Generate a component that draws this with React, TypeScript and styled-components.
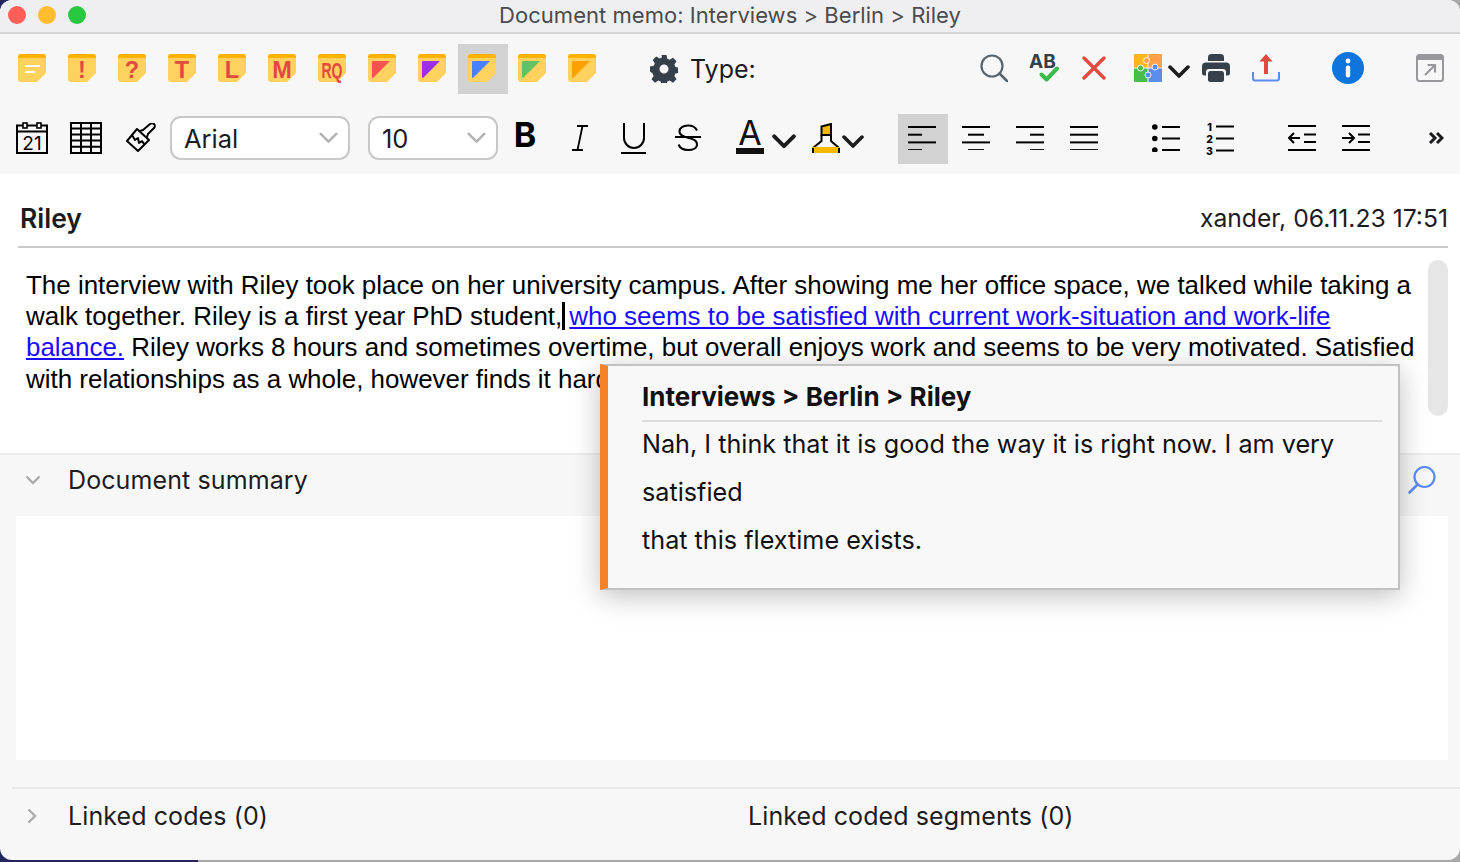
import React from 'react'
import styled, { createGlobalStyle } from 'styled-components'

const memoColors = ['#f5534f', '#9b30e8', '#4a80ff', '#62c264', '#ff9f00']

function MemoIcon({ label, tri }: { label?: string; tri?: string }) {
  return (
    <svg width="28" height="28" viewBox="0 0 28 28" overflow="visible">
      <path d="M3 0H25a3 3 0 0 1 3 3V19l-9 9H3a3 3 0 0 1-3-3V3a3 3 0 0 1 3-3z" fill="#ffd25f" />
      <path d="M3 0H25a3 3 0 0 1 3 3V4H0V3a3 3 0 0 1 3-3z" fill="#ffb300" />
      {tri && <path d="M5 7H22L5 24a1 1 0 0 1-1-1V8a1 1 0 0 1 1-1z" fill={tri} />}
      {label === undefined && !tri && (
        <g stroke="#fff" strokeWidth="2.2">
          <path d="M7 12H22M7 18H17" />
        </g>
      )}
      {label && (
        <text
          x="14"
          y="24"
          textAnchor="middle"
          fill="#e2493f"
          fontFamily="'Liberation Sans', Arial, sans-serif"
          fontWeight="700"
          fontSize={label === 'RQ' ? 22 : 23.5}
          textLength={label === 'RQ' ? 21 : undefined}
          lengthAdjust="spacingAndGlyphs"
        >
          {label}
        </text>
      )}
    </svg>
  )
}

function Chevron({ size = 22, color = '#1c1c1e', width = 3.6 }: { size?: number; color?: string; width?: number }) {
  return (
    <svg width={size} height={size * 0.6} viewBox="0 0 22 13">
      <path d="M2 2l9 9 9-9" fill="none" stroke={color} strokeWidth={width} strokeLinecap="round" strokeLinejoin="round" />
    </svg>
  )
}

function Gear() {
  return (
    <svg width="28" height="28" viewBox="0 0 28 28">
      <path
        fillRule="evenodd"
        fill="#36404a"
        d="M11.5 0h5l.8 3.8 2.4 1 3.3-2.1 3.5 3.5-2.1 3.3 1 2.4 3.8.8v5l-3.8.8-1 2.4 2.1 3.3-3.5 3.5-3.3-2.1-2.4 1-.8 3.8h-5l-.8-3.8-2.4-1-3.3 2.1-3.5-3.5 2.1-3.3-1-2.4L0 16.500v-5l3.8-.8 1-2.400-2.100-3.300 3.500-3.500 3.300 2.100 2.400-1zM14 9.500a4.500 4.500 0 1 0 0 9 4.500 4.500 0 0 0 0-9z"
      />
    </svg>
  )
}

function Loupe() {
  return (
    <svg width="28" height="28" viewBox="0 0 28 28">
      <circle cx="12" cy="12" r="10.500" fill="none" stroke="#56646f" strokeWidth="2.200" />
      <path d="M19.500 19.500L27 27" stroke="#56646f" strokeWidth="2.600" strokeLinecap="round" />
    </svg>
  )
}

function Spell() {
  return (
    <svg width="30" height="36" viewBox="0 0 30 36" overflow="visible">
      <text x="0" y="17.500" fontFamily="'Inter', sans-serif" fontWeight="700" fontSize="19" fill="#36404a">
        AB
      </text>
      <path d="M12.500 24.500l5 5L28 18.500" fill="none" stroke="#3cba4a" strokeWidth="4" strokeLinecap="round" strokeLinejoin="round" />
    </svg>
  )
}

function Cross() {
  return (
    <svg width="24" height="24" viewBox="0 0 24 24">
      <path d="M2 2l20 20M22 2L2 22" stroke="#e2493f" strokeWidth="3.400" strokeLinecap="round" />
    </svg>
  )
}

function Puzzle() {
  return (
    <svg width="28" height="28" viewBox="0 0 28 28">
      <path d="M1 0H13.500V13.500H0V1a1 1 0 0 1 1-1z" fill="#ffb61e" />
      <path d="M14.500 0H27a1 1 0 0 1 1 1V13.500H14.500z" fill="#ffa04a" />
      <path d="M0 14.500H13.500V28H1a1 1 0 0 1-1-1z" fill="#46bd4d" />
      <path d="M14.500 14.500H28V27a1 1 0 0 1-1 1H14.500z" fill="#5b8def" />
      <circle cx="12.500" cy="6.500" r="3" fill="#ffa04a" stroke="#fff" strokeWidth="0.900" />
      <circle cx="6.500" cy="14" r="3" fill="#46bd4d" stroke="#fff" strokeWidth="0.900" />
      <circle cx="14" cy="21" r="3" fill="#5b8def" stroke="#fff" strokeWidth="0.900" />
      <circle cx="21" cy="13" r="3" fill="#5b8def" stroke="#fff" strokeWidth="0.900" />
    </svg>
  )
}

function Printer() {
  return (
    <svg width="28" height="28" viewBox="0 0 28 28" fill="#36404a">
      <path d="M6 7V3.500A3.500 3.500 0 0 1 9.500 0h9A3.500 3.500 0 0 1 22 3.500V7z" />
      <path d="M4 8.500h20a4 4 0 0 1 4 4V19a2.500 2.500 0 0 1-2.500 2.500H24V18a3 3 0 0 0-3-3H7a3 3 0 0 0-3 3v3.500H2.500A2.500 2.500 0 0 1 0 19v-6.500a4 4 0 0 1 4-4z" />
      <rect x="6" y="17" width="16" height="11" rx="2.500" />
    </svg>
  )
}

function Upload() {
  return (
    <svg width="28" height="28" viewBox="0 0 28 28">
      <path d="M1 18v6.500a2 2 0 0 0 2 2h22a2 2 0 0 0 2-2V18" fill="none" stroke="#5b8def" strokeWidth="2" />
      <path d="M14 0l6.500 7.500h-4.500V20h-4V7.500H7.500z" fill="#e2493f" />
    </svg>
  )
}

function Info() {
  return (
    <svg width="32" height="32" viewBox="0 0 32 32">
      <circle cx="16" cy="16" r="16" fill="#0f75dc" />
      <circle cx="16" cy="9" r="2.400" fill="#fff" />
      <rect x="13.800" y="13.500" width="4.400" height="12" rx="2" fill="#fff" />
    </svg>
  )
}

function Popout() {
  return (
    <svg width="28" height="28" viewBox="0 0 28 28">
      <rect x="1" y="1" width="26" height="26" rx="2.500" fill="none" stroke="#98989c" strokeWidth="2" />
      <path d="M1 3a2 2 0 0 1 2-2h22a2 2 0 0 1 2 2v3H1z" fill="#98989c" />
      <path d="M9 21L19 11M11.500 11H19V18.500" fill="none" stroke="#98989c" strokeWidth="2.200" />
    </svg>
  )
}

function Calendar() {
  return (
    <svg width="32" height="32" viewBox="0 0 32 32">
      <path d="M1 3.500H31V31H1z" fill="none" stroke="#000" strokeWidth="2" />
      <path d="M1 9.500H31" stroke="#000" strokeWidth="2" />
      <rect x="7" y="1" width="4" height="5" fill="#fff" stroke="#000" strokeWidth="1.600" />
      <rect x="21" y="1" width="4" height="5" fill="#fff" stroke="#000" strokeWidth="1.600" />
      <text x="16" y="27.500" textAnchor="middle" fontFamily="'Inter', sans-serif" fontSize="19" fill="#000">
        21
      </text>
    </svg>
  )
}

function TableIcon() {
  return (
    <svg width="32" height="32" viewBox="0 0 32 32">
      <path
        d="M1 1H31V31H1zM1 6.500H31M1 12.500H31M1 18.500H31M1 24.800H31M11 1V31M21 1V31"
        fill="none"
        stroke="#000"
        strokeWidth="2"
      />
    </svg>
  )
}

function Brush() {
  return (
    <svg width="30" height="30" viewBox="0 0 30 30">
      <path
        d="M1 18L11 6L23 17L12 28zM6 12l3 5 3-2 1 5 3-2 2 3M14 8l3-1 7-6a2.800 2.800 0 0 1 4 4L22 11l-1 3"
        fill="none"
        stroke="#000"
        strokeWidth="2"
        strokeLinejoin="round"
      />
    </svg>
  )
}

function ItalicIcon() {
  return (
    <svg width="18" height="26" viewBox="0 0 18 26">
      <path d="M6 1H17M1 25H12M11.500 1L6.500 25" fill="none" stroke="#000" strokeWidth="1.800" />
    </svg>
  )
}

function UnderlineIcon() {
  return (
    <svg width="26" height="32" viewBox="0 0 26 32">
      <path d="M3 1V16a10 10 0 0 0 20 0V1" fill="none" stroke="#000" strokeWidth="2" />
      <path d="M0 31H25" stroke="#000" strokeWidth="2" />
    </svg>
  )
}

function StrikeIcon() {
  return (
    <svg width="26" height="28" viewBox="0 0 26 28">
      <path d="M22 6.500C20.500 3 17 1.500 13 1.500 8 1.500 4.500 4 4.500 7.500c0 8 17.500 4.500 17.500 13 0 3.500-4 5.500-9 5.500-4.500 0-8-1.800-9.500-5.500" fill="none" stroke="#000" strokeWidth="2" />
      <path d="M0 13H26" stroke="#000" strokeWidth="2" />
    </svg>
  )
}

function Marker() {
  return (
    <svg width="28" height="30" viewBox="0 0 28 30">
      <path d="M9.500 3.500L19 1V12H9.500z" fill="#f5b800" stroke="#000" strokeWidth="2" />
      <path d="M9.500 12V18L1 25V30M19 12V18L27 25V30" fill="none" stroke="#000" strokeWidth="2" />
      <path d="M0 24H28V30H0z" fill="#f5b800" />
      <path d="M1 30V25M27 30V25" stroke="#000" strokeWidth="2" />
    </svg>
  )
}

function Lines({ rows }: { rows: [number, number][] }) {
  return (
    <svg width="28" height="24" viewBox="0 0 28 24">
      {rows.map(([a, b], i) => (
        <rect key={i} x={a} y={i * 7.700} width={b - a} height="2" fill="#000" />
      ))}
    </svg>
  )
}

function BulletList() {
  return (
    <svg width="28" height="28" viewBox="0 0 28 28">
      {[3, 14.500, 26].map((y) => (
        <g key={y}>
          <circle cx="2.800" cy={y} r="2.800" fill="#000" />
          <rect x="10" y={y - 1} width="18" height="2" fill="#000" />
        </g>
      ))}
    </svg>
  )
}

function NumberList() {
  return (
    <svg width="28" height="38" viewBox="0 0 28 38" overflow="visible">
      {['1', '2', '3'].map((n, i) => (
        <g key={n}>
          <text x="3.500" y={11.500 + i * 12} textAnchor="middle" fontFamily="'Inter', sans-serif" fontWeight="800" fontSize="10.500" fill="#000">
            {n}
          </text>
          <rect x="10" y={6.500 + i * 12} width="18" height="2" fill="#000" />
        </g>
      ))}
    </svg>
  )
}

function Indent({ out }: { out?: boolean }) {
  return (
    <svg width="28" height="26" viewBox="0 0 28 26">
      <path d="M0 1H28M16 9.500H28M16 17H28M0 25H28" stroke="#000" strokeWidth="2" />
      {out ? (
        <path d="M12 13H1.500M6 8l-5 5 5 5" fill="none" stroke="#000" strokeWidth="2" />
      ) : (
        <path d="M0 13H11M7 8l5 5-5 5" fill="none" stroke="#000" strokeWidth="2" />
      )}
    </svg>
  )
}

function More() {
  return (
    <svg width="16" height="12" viewBox="0 0 16 12">
      <path d="M2 1l5 5-5 5M9 1l5 5-5 5" fill="none" stroke="#1c1c1e" strokeWidth="3" />
    </svg>
  )
}

function BlueSearch() {
  return (
    <svg width="28" height="28" viewBox="0 0 28 28">
      <circle cx="16.500" cy="11" r="10" fill="none" stroke="#5b8def" strokeWidth="2.200" />
      <path d="M9.500 18.500L1.500 26.500" stroke="#5b8def" strokeWidth="2.600" strokeLinecap="round" />
    </svg>
  )
}

export default function App() {
  return (
    <>
      <GlobalStyle />
      <Window>
        <TitleBar>
          <Lights>
            <Light $color="#ff5f57" />
            <Light $color="#febc2e" />
            <Light $color="#28c840" />
          </Lights>
          Document memo: Interviews &gt; Berlin &gt; Riley
        </TitleBar>

        <TopRow>
          <Tool $w={50}><MemoIcon /></Tool>
          {['!', '?', 'T', 'L', 'M', 'RQ'].map((l) => (
            <Tool key={l} $w={50}><MemoIcon label={l} /></Tool>
          ))}
          {memoColors.map((c, i) => (
            <Tool key={c} $w={50} $active={i === 2}><MemoIcon tri={c} /></Tool>
          ))}
          <GearSlot><Gear /></GearSlot>
          <TypeLabel>Type:</TypeLabel>
          <Tool $w={50} $ml={214}><Loupe /></Tool>
          <Tool $w={50}><Spell /></Tool>
          <Tool $w={50}><Cross /></Tool>
          <Tool $w={28} $ml={14} $flush><Puzzle /></Tool>
          <ChevronTool $w={28} $ml={3}><Chevron /></ChevronTool>
          <Tool $w={50} $ml={-1}><Printer /></Tool>
          <Tool $w={50}><Upload /></Tool>
          <Tool $w={50} $ml={32}><Info /></Tool>
          <Tool $w={50} $ml={32}><Popout /></Tool>
        </TopRow>

        <FormatRow>
          <Tool $w={54}><Calendar /></Tool>
          <Tool $w={54}><TableIcon /></Tool>
          <Tool $w={54} $ml={1}><Brush /></Tool>
          <Select $w={180} $ml={1}>
            Arial
            <Chevron color="#b3b3b3" size={19} width={3} />
          </Select>
          <Select $w={130} $ml={18}>
            10
            <Chevron color="#b3b3b3" size={19} width={3} />
          </Select>
          <Tool $w={54} $ml={2}><BoldGlyph>B</BoldGlyph></Tool>
          <Tool $w={54}><ItalicIcon /></Tool>
          <Tool $w={54}><UnderlineIcon /></Tool>
          <Tool $w={54}><StrikeIcon /></Tool>
          <ColorTool><ColorGlyph>A</ColorGlyph><ColorBar /></ColorTool>
          <ChevronTool $w={26}><Chevron size={24} /></ChevronTool>
          <Tool $w={32} $ml={13} $flush><Marker /></Tool>
          <ChevronTool $w={22}><Chevron /></ChevronTool>
          <Tool $w={50} $ml={34} $active><Lines rows={[[0, 28], [0, 14], [0, 28], [0, 14]]} /></Tool>
          <Tool $w={50} $ml={4}><Lines rows={[[0, 28], [6, 22], [0, 28], [6, 22]]} /></Tool>
          <Tool $w={50} $ml={4}><Lines rows={[[0, 28], [14, 28], [0, 28], [14, 28]]} /></Tool>
          <Tool $w={50} $ml={4}><Lines rows={[[0, 28], [0, 28], [0, 28], [0, 28]]} /></Tool>
          <Tool $w={54} $ml={30}><BulletList /></Tool>
          <Tool $w={54}><NumberList /></Tool>
          <Tool $w={54} $ml={28}><Indent out /></Tool>
          <Tool $w={54}><Indent /></Tool>
          <Tool $w={40} $ml={33}><More /></Tool>
        </FormatRow>

        <MemoSheet>
          <MemoHeader>
            <MemoName>Riley</MemoName>
            <MemoMeta>xander, 06.11.23 17:51</MemoMeta>
          </MemoHeader>
          <Editor>
            <EditorText>
              The interview with Riley took place on her university campus. After showing me her office space, we talked while taking a<br />
              walk together. Riley is a first year PhD student,<Caret /><LinkedText>who seems to be satisfied with current work-situation and work-life</LinkedText><br />
              <LinkedText>balance.</LinkedText> Riley works 8 hours and sometimes overtime, but overall enjoys work and seems to be very motivated. Satisfied<br />
              with relationships as a whole, however finds it hard
            </EditorText>
            <ScrollThumb />
          </Editor>
        </MemoSheet>

        <SummaryHeader>
          <Disclosure>
            <svg width="16" height="10" viewBox="0 0 16 10">
              <path d="M1.500 1.500L8 8l6.500-6.500" fill="none" stroke="#ababab" strokeWidth="2.400" />
            </svg>
          </Disclosure>
          <SectionLabel>Document summary</SectionLabel>
          <SummarySearch><BlueSearch /></SummarySearch>
        </SummaryHeader>
        <SummaryBox />

        <LinkedRow>
          <LinkedDisclosure>
            <svg width="10" height="16" viewBox="0 0 10 16">
              <path d="M1.500 1.500L8 8l-6.500 6.500" fill="none" stroke="#ababab" strokeWidth="2.400" />
            </svg>
          </LinkedDisclosure>
          <LinkedCodes>Linked codes (0)</LinkedCodes>
          <SectionLabel>Linked coded segments (0)</SectionLabel>
        </LinkedRow>

        <SegmentPopup>
          <PopupTitle>Interviews &gt; Berlin &gt; Riley</PopupTitle>
          <PopupLine>Nah, I think that it is good the way it is right now. I am very</PopupLine>
          <PopupLine>satisfied</PopupLine>
          <PopupLine>that this flextime exists.</PopupLine>
        </SegmentPopup>
      </Window>
    </>
  )
}

const GlobalStyle = createGlobalStyle`
  html, body {
    margin: 0;
    padding: 0;
    height: 862px;
    overflow: hidden;
    background: linear-gradient(to right, #24265e 198px, #a8a8a8 198px);
    font-family: 'Inter', 'Liberation Sans', sans-serif;
    color: #1c1c1e;
  }
`

const Window = styled.div`
  position: relative;
  width: 1460px;
  height: 860px;
  border-radius: 12px;
  overflow: hidden;
  background: #f7f7f7;
  display: flex;
  flex-direction: column;
`

const TitleBar = styled.div`
  position: relative;
  height: 34px;
  flex: none;
  box-sizing: border-box;
  padding-bottom: 3px;
  border-bottom: 2px solid #d4d4d7;
  background: #efeff2;
  display: flex;
  align-items: center;
  justify-content: center;
  font-size: 22px;
  letter-spacing: 0.04px;
  color: #4b4b4d;
`

const Lights = styled.div`
  position: absolute;
  left: 8px;
  top: 6px;
  display: flex;
  gap: 12px;
`

const Light = styled.span<{ $color: string }>`
  width: 18px;
  height: 18px;
  border-radius: 50%;
  background: ${(p) => p.$color};
`

const TopRow = styled.div`
  height: 70px;
  flex: none;
  box-sizing: border-box;
  padding: 10px 0 0 8px;
  display: flex;
  align-items: flex-start;
`

const FormatRow = styled.div`
  height: 70px;
  flex: none;
  box-sizing: border-box;
  padding: 10px 0 0 6px;
  display: flex;
  align-items: flex-start;
`

const Tool = styled.div<{ $w: number; $ml?: number; $active?: boolean; $flush?: boolean }>`
  width: ${(p) => p.$w}px;
  height: 50px;
  flex: none;
  box-sizing: border-box;
  margin-left: ${(p) => p.$ml ?? 0}px;
  padding: ${(p) => (p.$flush ? '0 0 2px' : '0 2px 2px 0')};
  display: flex;
  align-items: center;
  justify-content: center;
  background: ${(p) => (p.$active ? '#d2d2d2' : 'transparent')};
`

const ChevronTool = styled(Tool)`
  padding: 5px 0 0;
`

const GearSlot = styled.div`
  width: 28px;
  height: 50px;
  margin-left: 42px;
  display: flex;
  align-items: center;
`

const TypeLabel = styled.div`
  width: 66px;
  height: 50px;
  margin-left: 12px;
  font-size: 25px;
  line-height: 50px;
`

const Select = styled.div<{ $w: number; $ml: number }>`
  width: ${(p) => p.$w}px;
  margin-left: ${(p) => p.$ml}px;
  margin-top: 2px;
  height: 44px;
  flex: none;
  box-sizing: border-box;
  border: 2px solid #c8c8c8;
  border-radius: 11px;
  background: #fff;
  padding: 0 10px 0 12px;
  display: flex;
  align-items: center;
  justify-content: space-between;
  font-size: 25.500px;
`

const BoldGlyph = styled.span`
  font-size: 34px;
  font-weight: 700;
  line-height: 1;
  color: #000;
  margin: 0 2px 6px 0;
`

const ColorTool = styled.div`
  width: 42px;
  height: 50px;
  margin-left: 13px;
  flex: none;
  display: flex;
  flex-direction: column;
  align-items: center;
  padding-top: 5px;
  box-sizing: border-box;
`

const ColorGlyph = styled.span`
  font-size: 34px;
  line-height: 28px;
  color: #111;
`

const ColorBar = styled.span`
  width: 28px;
  height: 6px;
  margin-top: 1px;
  background: #111;
`

const MemoSheet = styled.div`
  background: #fff;
  height: 279px;
  flex: none;
  display: flex;
  flex-direction: column;
`

const MemoHeader = styled.div`
  height: 74px;
  flex: none;
  box-sizing: border-box;
  margin: 0 12px 0 18px;
  padding: 15px 0 0 2px;
  border-bottom: 2px solid #c9c9c9;
  display: flex;
  justify-content: space-between;
  align-items: center;
`

const MemoName = styled.div`
  font-size: 26.500px;
  font-weight: 600;
`

const MemoMeta = styled.div`
  font-size: 24.700px;
`

const Editor = styled.div`
  flex: 1;
  display: flex;
  justify-content: space-between;
  padding: 12px 12px 0 26px;
`

const EditorText = styled.div`
  font-family: 'Liberation Sans', Arial, sans-serif;
  font-size: 25.950px;
  line-height: 31.200px;
  color: #000;
  white-space: nowrap;
  padding-top: 10px;
`

const Caret = styled.span`
  display: inline-block;
  width: 3px;
  height: 28px;
  margin: 0 4px 0 0;
  vertical-align: -5px;
  background: #000;
`

const LinkedText = styled.span`
  color: #1a0dff;
  text-decoration: underline;
`

const ScrollThumb = styled.div`
  width: 20px;
  height: 156px;
  flex: none;
  border-radius: 10px;
  background: #e6e6e6;
`

const SummaryHeader = styled.div`
  height: 63px;
  flex: none;
  box-sizing: border-box;
  border-top: 2px solid #ececec;
  padding: 0 0 11px 25px;
  display: flex;
  align-items: center;
`

const Disclosure = styled.div`
  width: 43px;
  flex: none;
  display: flex;
  align-items: center;
`

const LinkedDisclosure = styled(Disclosure)`
  width: 41px;
`

const SectionLabel = styled.div`
  font-size: 25px;
  letter-spacing: 0.1px;
  color: #1c1c1e;
`

const SummarySearch = styled.div`
  margin-left: auto;
  margin-right: 24px;
  display: flex;
`

const SummaryBox = styled.div`
  height: 244px;
  flex: none;
  margin: 0 12px 0 16px;
  background: #fff;
`

const LinkedRow = styled.div`
  flex: 1;
  margin: 27px 0 0 12px;
  padding: 0 0 18px 15px;
  box-sizing: border-box;
  border-top: 2px solid #e9e9e9;
  display: flex;
  align-items: center;
`

const LinkedCodes = styled(SectionLabel)`
  width: 680px;
  flex: none;
`

const SegmentPopup = styled.div`
  position: absolute;
  left: 600px;
  top: 364px;
  width: 800px;
  height: 226px;
  box-sizing: border-box;
  padding: 11px 16px 0 34px;
  background: #f8f8f8;
  border: 2px solid #c2c2c2;
  border-left: 8px solid #f58229;
  box-shadow: 0 6px 26px rgba(0, 0, 0, 0.25);
`

const PopupTitle = styled.div`
  height: 45px;
  box-sizing: border-box;
  margin-bottom: -2px;
  border-bottom: 2px solid #dcdcdc;
  font-size: 26px;
  font-weight: 700;
  line-height: 40px;
  color: #111;
`

const PopupLine = styled.div`
  font-size: 25.200px;
  line-height: 48px;
  color: #111;
`
